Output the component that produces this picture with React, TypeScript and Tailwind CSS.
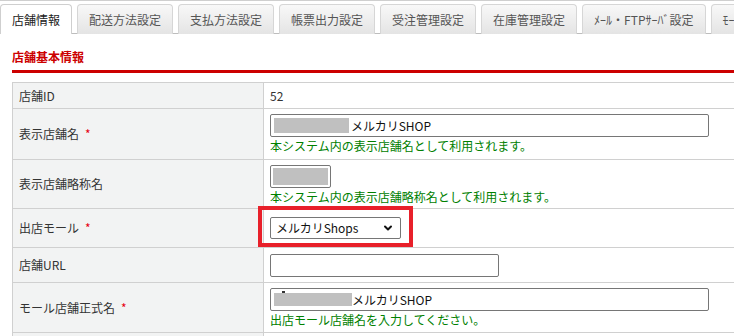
import { ChevronDown } from "lucide-react";

const TABS = [
  "店舗情報",
  "配送方法設定",
  "支払方法設定",
  "帳票出力設定",
  "受注管理設定",
  "在庫管理設定",
  "ﾒｰﾙ・FTPｻｰﾊﾞ設定",
  "ﾓｰﾙ設定",
];

function Req() {
  return <span className="ml-[6px] text-[#e60012]">*</span>;
}

function Blur({ w, h = 14 }: { w: number; h?: number }) {
  return <span className="inline-block bg-[#c0c0c0] align-middle" style={{ width: w, height: h }} />;
}

function Help({ children }: { children: React.ReactNode }) {
  return <div className="mt-[1px] leading-[16px] text-[#008000]">{children}</div>;
}

const labelCls = "w-[251px] border border-[#d0d0d0] bg-[#f2f3f3] pl-[6px] align-middle text-[#333]";
const valueCls = "border border-[#d0d0d0] bg-white pl-[6px] align-top pt-[5px]";

export default function App() {
  return (
    <div
      className="h-[336px] w-[734px] overflow-hidden bg-white text-[12px] text-[#333]"
      style={{ fontFamily: '"Noto Sans CJK JP", "Noto Sans", sans-serif' }}
    >
      {/* Tabs */}
      <div className="flex h-[34px] items-end gap-[5px] whitespace-nowrap border-t border-b border-t-[#cfcfcf] border-b-[#bdbdbd]">
        {TABS.map((t, i) => (
          <div
            key={t}
            className={`-mb-px flex h-[30px] shrink-0 items-center justify-center rounded-t-[4px] border border-b-0 px-[11px] ${
              i === 0
                ? "border-[#cfcfcf] bg-white text-[#222]"
                : "border-[#d6d6d6] bg-gradient-to-b from-[#f8f8f8] to-[#e4e4e4] text-[#555]"
            } ${i === 0 ? "" : "h-[29px] border-b"}`}
          >
            {t}
          </div>
        ))}
      </div>

      {/* Section title */}
      <div className="ml-[12px] mt-[14px] border-b-[3px] border-[#cc0000] pb-[4px] text-[12px] font-bold leading-[18px] text-[#cc0000]">
        店舗基本情報
      </div>

      <table className="ml-[12px] mt-[9px] w-[760px] border-collapse">
        <tbody>
          <tr className="h-[26px]">
            <td className={labelCls}>店舗ID</td>
            <td className={`${valueCls} !align-middle !pt-0`}>52</td>
          </tr>
          <tr className="h-[51px]">
            <td className={labelCls}>
              表示店舗名
              <Req />
            </td>
            <td className={valueCls}>
              <div className="flex h-[23px] w-[439px] items-center rounded-[2px] border border-[#767676] pl-[3px] text-[#111]">
                <Blur w={75} h={15} />
                <span className="ml-[2px]">メルカリSHOP</span>
              </div>
              <Help>本システム内の表示店舗名として利用されます。</Help>
            </td>
          </tr>
          <tr className="h-[49px]">
            <td className={labelCls}>表示店舗略称名</td>
            <td className={valueCls}>
              <div className="flex h-[23px] w-[61px] items-center rounded-[2px] border border-[#767676] px-[2px]">
                <Blur w={55} h={17} />
              </div>
              <Help>本システム内の表示店舗略称名として利用されます。</Help>
            </td>
          </tr>
          <tr className="h-[39px]">
            <td className={labelCls}>
              出店モール
              <Req />
            </td>
            <td className="relative border border-[#d0d0d0] bg-white pl-[6px] align-middle">
              <div className="flex h-[22px] w-[131px] items-center justify-between rounded-[2px] border border-[#767676] pl-[5px] pr-[6px] text-[#111]">
                <span>メルカリShops</span>
                <ChevronDown size={12} strokeWidth={4} />
              </div>
              <div className="absolute left-[-6px] top-[-3px] h-[41px] w-[155px] border-[4px] border-[#e8202a]" />
            </td>
          </tr>
          <tr className="h-[35px]">
            <td className={labelCls}>店舗URL</td>
            <td className={`${valueCls} !align-middle !pt-0`}>
              <div className="h-[23px] w-[229px] rounded-[2px] border border-[#767676]" />
            </td>
          </tr>
          <tr className="h-[50px]">
            <td className={labelCls}>
              モール店舗正式名
              <Req />
            </td>
            <td className={valueCls}>
              <div className="relative flex h-[23px] w-[439px] items-center rounded-[2px] border border-[#767676] pl-[3px] text-[#111]">
                <span className="absolute left-[11px] top-[2px] h-[2px] w-[3px] bg-[#333]" />
                <Blur w={78} h={13} />
                <span>メルカリSHOP</span>
              </div>
              <Help>出店モール店舗名を入力してください。</Help>
            </td>
          </tr>
          <tr className="h-[20px]">
            <td className={labelCls} />
            <td className={valueCls} />
          </tr>
        </tbody>
      </table>
    </div>
  );
}
